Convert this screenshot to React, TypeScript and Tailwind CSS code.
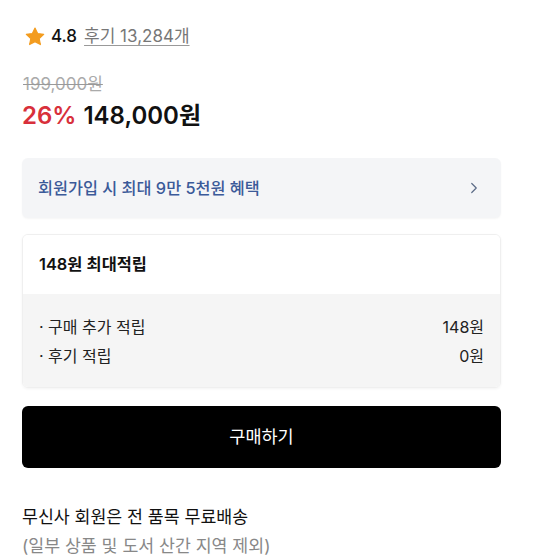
import { ChevronRight } from "lucide-react";

const font = { fontFamily: "Inter, 'Noto Sans CJK KR', sans-serif" };

export default function App() {
    return (
        <div className="w-[555px] h-[555px] bg-white overflow-hidden" style={font}>
            <div className="ml-[22px] w-[479px] pt-[25px]">
                {/* 평점 */}
                <div className="flex items-center h-[24px]">
                    <svg width="22" height="22" viewBox="0 0 24 24" className="ml-[2px]">
                        <path
                            d="M12 2.2l2.9 6.1 6.6.8-4.9 4.6 1.3 6.6L12 17.1l-5.9 3.2 1.3-6.6-4.9-4.6 6.6-.8z"
                            fill="#f39c1f"
                            stroke="#f39c1f"
                            strokeWidth="1.2"
                            strokeLinejoin="round"
                        />
                    </svg>
                    <span className="ml-[5px] text-[17px] font-medium text-[#111]">4.8</span>
                    <span className="ml-[7px] text-[17px] text-[#777] underline underline-offset-[3px] decoration-[#999]">
                        후기 13,284개
                    </span>
                </div>

                {/* 가격 */}
                <div className="mt-[24px] text-[17px] text-[#aaa] line-through decoration-[#999] leading-[22px] ml-[1px]">
                    199,000원
                </div>
                <div className="mt-[5px] flex items-center text-[24px] font-semibold leading-[32px]">
                    <span className="text-[#d8303b]">26%</span>
                    <span className="ml-[7px] text-[#111]">148,000원</span>
                </div>

                {/* 혜택 배너 */}
                <div className="mt-[26px] h-[60px] rounded-[6px] bg-[#f4f5f7] shadow-[0_1px_2px_rgba(0,0,0,0.04)] flex items-center justify-between pl-[16px] pr-[18px]">
                    <span className="text-[16.3px] font-medium text-[#3b5a99]">회원가입 시 최대 9만 5천원 혜택</span>
                    <ChevronRight size={18} strokeWidth={1.6} className="text-[#5b6b86]" />
                </div>

                {/* 적립 */}
                <div className="mt-[16px] rounded-[6px] overflow-hidden border border-[#efefef] shadow-[0_1px_3px_rgba(0,0,0,0.05)]">
                    <div className="h-[59px] bg-white flex items-center pl-[16px] text-[16.4px] font-semibold text-[#111]">
                        148원 최대적립
                    </div>
                    <div className="bg-[#f5f5f5] px-[16px] pt-[23px] pb-[21px] flex flex-col gap-[9px] text-[16px] text-[#222]">
                        <div className="flex justify-between leading-[20px]">
                            <span>· 구매 추가 적립</span>
                            <span>148원</span>
                        </div>
                        <div className="flex justify-between leading-[20px]">
                            <span>· 후기 적립</span>
                            <span>0원</span>
                        </div>
                    </div>
                </div>

                {/* 구매 버튼 */}
                <button className="mt-[18px] w-full h-[62px] rounded-[6px] bg-black text-white text-[17.5px] font-normal">
                    구매하기
                </button>

                {/* 배송 안내 */}
                <div className="mt-[34px] text-[17.3px] leading-[29px]">
                    <div className="text-[#111]">무신사 회원은 전 품목 무료배송</div>
                    <div className="text-[#888]">(일부 상품 및 도서 산간 지역 제외)</div>
                </div>
            </div>
        </div>
    );
}
